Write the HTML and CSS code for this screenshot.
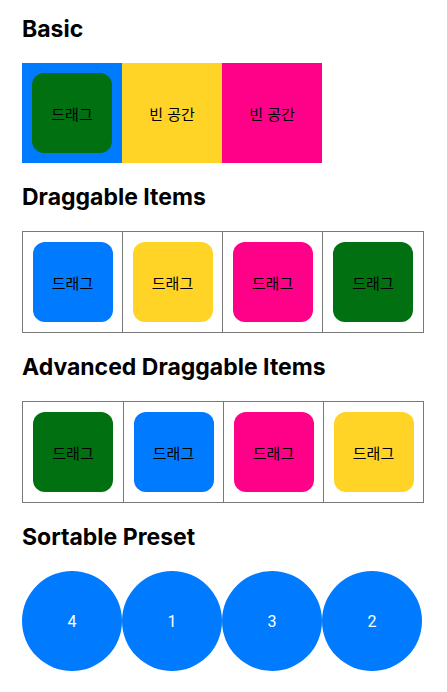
FILE: index.html
```html
<!DOCTYPE html>
<html lang="ko">
<head>
<meta charset="utf-8">
<link rel="stylesheet" href="styles.css">
</head>
<body>
<main class="page">
  <section class="section">
    <h2 class="title">Basic</h2>
    <div class="basic-row">
      <div class="drop blue"><div class="item green">드래그</div></div>
      <div class="drop yellow"><span class="label">빈 공간</span></div>
      <div class="drop pink"><span class="label">빈 공간</span></div>
    </div>
  </section>
  <section class="section">
    <h2 class="title">Draggable Items</h2>
    <div class="grid">
      <div class="cell cell-r"><div class="item blue">드래그</div></div>
      <div class="cell cell-r"><div class="item yellow">드래그</div></div>
      <div class="cell cell-r"><div class="item pink">드래그</div></div>
      <div class="cell"><div class="item green">드래그</div></div>
    </div>
  </section>
  <section class="section">
    <h2 class="title">Advanced Draggable Items</h2>
    <div class="grid">
      <div class="cell"><div class="item green">드래그</div></div>
      <div class="cell cell-l"><div class="item blue">드래그</div></div>
      <div class="cell cell-l"><div class="item pink">드래그</div></div>
      <div class="cell cell-l"><div class="item yellow">드래그</div></div>
    </div>
  </section>
  <section class="section">
    <h2 class="title">Sortable Preset</h2>
    <div class="circles">
      <div class="circle">4</div>
      <div class="circle">1</div>
      <div class="circle">3</div>
      <div class="circle">2</div>
    </div>
  </section>
</main>
</body>
</html>
```

FILE: styles.css
```css
* { box-sizing: border-box; }
html, body { margin: 0; padding: 0; background: #fff; }
body {
  font-family: Inter, "Noto Sans CJK KR", sans-serif;
  color: #000;
}
.page {
  padding: 15px 22px 0 22px;
  display: flex;
  flex-direction: column;
  gap: 20px;
}
.section { display: flex; flex-direction: column; }
.title {
  margin: 0 0 20px 0;
  font-size: 23px;
  line-height: 28px;
  font-weight: 700;
  letter-spacing: 0;
}
.basic-row { display: flex; }
.drop {
  width: 100px;
  height: 100px;
  display: flex;
  align-items: center;
  justify-content: center;
}
.label, .item {
  font-family: "Noto Sans CJK KR", sans-serif;
  font-size: 15px;
  color: #000;
}
.item {
  width: 80px;
  height: 80px;
  border-radius: 12px;
  display: flex;
  align-items: center;
  justify-content: center;
}
.blue { background: #007aff; }
.yellow { background: #ffd426; }
.pink { background: #ff0088; }
.green { background: #007010; }
.grid {
  display: flex;
  width: 402px;
  border: 1px solid #7a7a7a;
}
.cell {
  width: 100px;
  height: 100px;
  display: flex;
  align-items: center;
  justify-content: center;
}
.cell-r { border-right: 1px solid #7a7a7a; }
.cell-l { border-left: 1px solid #7a7a7a; }
.circles { display: flex; }
.circle {
  width: 100px;
  height: 100px;
  border-radius: 50%;
  background: #007aff;
  color: #fff;
  font-family: Roboto, sans-serif;
  font-size: 16px;
  display: flex;
  align-items: center;
  justify-content: center;
}
```
